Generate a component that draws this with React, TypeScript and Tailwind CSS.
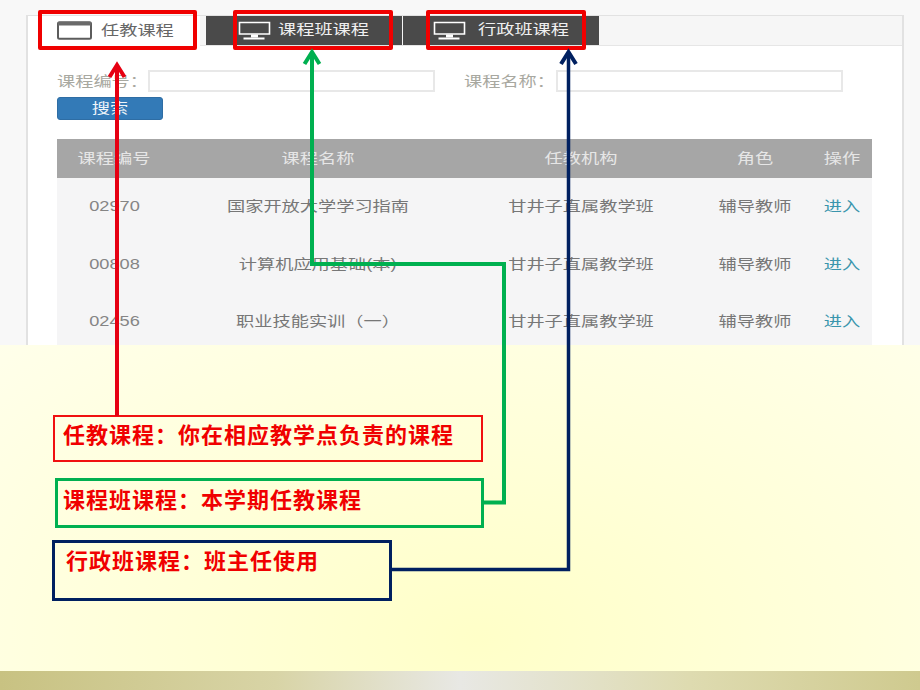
const CJK = 'font-["Liberation_Sans","Noto_Sans_CJK_SC",sans-serif]'

const rows = [
  { code: '02970', name: '国家开放大学学习指南' },
  { code: '00808', name: '计算机应用基础(本)' },
  { code: '02456', name: '职业技能实训（一）' },
]

const cols = 'grid grid-cols-[114px_294px_232px_116px_57px]'

// stretched text, the screenshot is a widened slide
function Wide({ children, left }: { children: React.ReactNode; left?: boolean }) {
  return (
    <span
      className={`inline-block whitespace-nowrap scale-x-[1.3] [text-spacing-trim:space-all] ${left ? 'origin-left' : 'origin-center'}`}
    >
      {children}
    </span>
  )
}

function WindowIcon() {
  return (
    <svg width="36" height="20" viewBox="0 0 36 20" className="shrink-0">
      <rect x="1" y="1.2" width="33" height="16.5" rx="1.5" fill="#fff" stroke="#5c5c5c" strokeWidth="2" />
      <rect x="1" y="1" width="33" height="3.5" fill="#6a6a6a" />
    </svg>
  )
}

function MonitorIcon() {
  return (
    <svg width="34" height="20" viewBox="0 0 34 20" className="shrink-0">
      <path d="M1.5 1.5H31.5V13H1.5Z" fill="none" stroke="#fff" strokeWidth="1.6" />
      <rect x="13" y="13.5" width="7" height="3" fill="#fff" />
      <rect x="5.5" y="16.5" width="21" height="2" fill="#fff" />
    </svg>
  )
}

function Tab({ label, className, gap }: { label: string; className: string; gap: string }) {
  return (
    <div className={`flex h-[29px] w-[196px] items-center bg-[#4a4a4a] text-[14px] text-[#f0f0f0] ${className}`}>
      <MonitorIcon />
      <span className={`${gap} -translate-y-px`}>
        <Wide left>{label}</Wide>
      </span>
    </div>
  )
}

function Field({ label, className }: { label: string; className: string }) {
  return (
    <div className="flex items-center">
      <span className={`text-[14px] text-[#a8a8a0] ${className}`}>
        <Wide left>{label}</Wide>
      </span>
      <div className="h-[22px] w-[287px] border-2 border-[#e8e8e8] bg-white" />
    </div>
  )
}

function Arrow({ x, y, color }: { x: number; y: number; color: string }) {
  return (
    <path
      d={`M${x - 7.5} ${y + 14}L${x} ${y + 2}L${x + 7.5} ${y + 14}`}
      fill="none"
      stroke={color}
      strokeWidth="4"
    />
  )
}

export default function App() {
  return (
    <div className={`relative h-[690px] w-[920px] overflow-hidden ${CJK}`}>
      {/* Course page */}
      <div className="h-[345px] overflow-hidden bg-[#f8f8f8] pl-[26px] pt-[15px]">
        <div className="h-[400px] w-[878px] border-x-2 border-t border-[#e2e2e2] bg-white">
          {/* Tabs */}
          <div className="flex h-[30px] border-b border-[#e6e6e6] bg-[#f6f6f6]">
            <div className="flex h-[30px] w-[172px] items-center bg-white pl-[29px] text-[14px] text-[#666]">
              <WindowIcon />
              <span className="ml-[8px] -translate-y-px">
                <Wide left>任教课程</Wide>
              </span>
            </div>
            <div className="ml-[6px]" />
            <Tab label="课程班课程" className="pl-[32px]" gap="ml-[6px]" />
            <div className="ml-px" />
            <Tab label="行政班课程" className="pl-[30px]" gap="ml-[11px]" />
          </div>

          {/* Search form */}
          <div className="px-[29px] pt-[24px]">
            <div className="flex">
              <Field label="课程编号：" className="w-[91px]" />
              <Field label="课程名称：" className="ml-[29px] w-[92px]" />
            </div>
            <div className="mt-[5px] flex h-[23px] w-[106px] items-center justify-center rounded-[3px] border border-[#2e6da4] bg-[#337ab7] text-[14px] text-[#eef4f9]">
              <Wide>搜索</Wide>
            </div>

            {/* Table */}
            <div className="mt-[19px] w-[815px] bg-[#f5f5f6] text-[14px] text-[#777]">
              <div className={`${cols} h-[39px] items-center bg-[#a6a6a6] text-center text-[#e6e6e6]`}>
                {['课程编号', '课程名称', '任教机构', '角色', '操作'].map(h => (
                  <div key={h}>
                    <Wide>{h}</Wide>
                  </div>
                ))}
              </div>
              {rows.map(r => (
                <div key={r.code} className={`${cols} h-[57.5px] items-center text-center`}>
                  <div className="text-[#858585]">
                    <Wide>{r.code}</Wide>
                  </div>
                  <div>
                    <Wide>{r.name}</Wide>
                  </div>
                  <div>
                    <Wide>甘井子直属教学班</Wide>
                  </div>
                  <div>
                    <Wide>辅导教师</Wide>
                  </div>
                  <div className="text-[#3a95ad]">
                    <Wide>进入</Wide>
                  </div>
                </div>
              ))}
            </div>
          </div>
        </div>
      </div>

      {/* Slide area with callouts */}
      <div className="h-[326px] bg-[radial-gradient(ellipse_at_52%_90%,#ffffc8_0%,#ffffd8_45%,#ffffea_100%)] pt-[70px] text-[22px] font-bold leading-none tracking-[1px] text-[#f00000]">
        <div className="ml-[53px] h-[47px] w-[430px] border-2 border-[#f01010] pl-[8px] pt-[8px]">
          任教课程：你在相应教学点负责的课程
        </div>
        <div className="ml-[55px] mt-[16px] h-[50px] w-[429px] border-[3px] border-[#00b050] pl-[5px] pt-[9px]">
          课程班课程：本学期任教课程
        </div>
        <div className="ml-[52px] mt-[12px] h-[61px] w-[340px] border-[3px] border-[#002060] pl-[11px] pt-[8px]">
          行政班课程：班主任使用
        </div>
      </div>

      {/* Footer strip */}
      <div className="h-[19px] bg-[linear-gradient(90deg,#c8c282_0%,#d8d4a6_30%,#e8e8e4_50%,#dedbb0_75%,#cfca8f_100%)]" />

      {/* Highlight boxes around the tabs */}
      <div className="absolute left-[38px] top-[10px] h-[40px] w-[159px] rounded-[2px] border-4 border-[#f00000]" />
      <div className="absolute left-[233px] top-[10px] h-[40px] w-[160px] rounded-[2px] border-4 border-[#f00000]" />
      <div className="absolute left-[426px] top-[10px] h-[40px] w-[160px] rounded-[2px] border-4 border-[#f00000]" />

      {/* Connectors */}
      <svg width="920" height="690" className="pointer-events-none absolute left-0 top-0">
        <path d="M117 416V66" fill="none" stroke="#e60012" strokeWidth="4" />
        <Arrow x={117} y={63} color="#e60012" />
        <path d="M312 53V264H504V502.5H483" fill="none" stroke="#00b050" strokeWidth="4" />
        <Arrow x={312} y={50} color="#00b050" />
        <path d="M568.5 53V569.5H392" fill="none" stroke="#002060" strokeWidth="3.5" />
        <Arrow x={568.5} y={50} color="#002060" />
      </svg>
    </div>
  )
}
